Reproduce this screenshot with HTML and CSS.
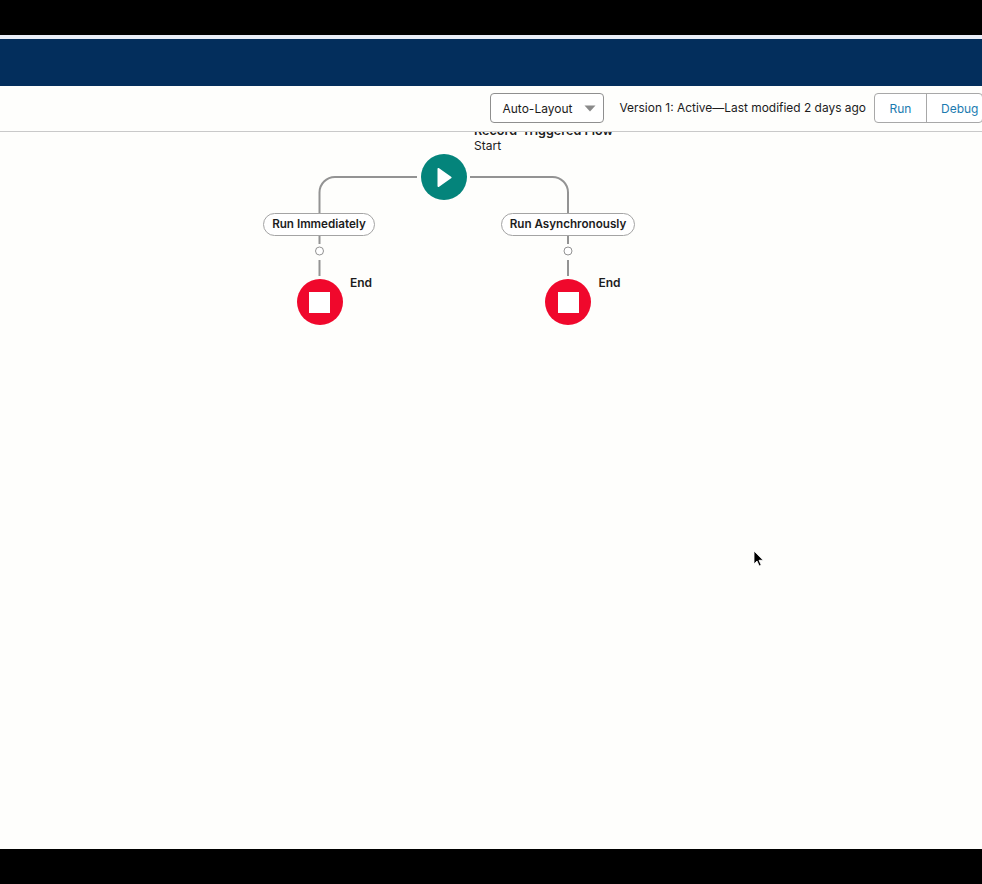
FILE: index.html
```html
<!DOCTYPE html>
<html lang="en">
<head>
<meta charset="utf-8">
<title>Flow Builder</title>
<link rel="stylesheet" href="styles.css">
</head>
<body>
<div class="page">
  <div class="letterbox-top"></div>
  <div class="strip"></div>
  <header class="brand"></header>
  <div class="toolbar">
    <div class="select"><span>Auto-Layout</span><svg class="caret" width="12" height="7" viewBox="0 0 12 7"><path d="M0.5 0.5h11L6 6.500z" fill="#8a8a8a"/></svg></div>
    <span class="version">Version 1: Active—Last modified 2 days ago</span>
    <div class="btn-group"><span class="btn">Run</span><span class="btn">Debug</span></div>
  </div>
  <main class="canvas">
    <svg class="wires" width="982" height="717" viewBox="0 0 982 717" fill="none">
      <g stroke="#939393" stroke-width="2">
        <path d="M417 45H335a15.500 15.500 0 0 0-15.500 15.500V82"/>
        <path d="M470 45H552.500a15.500 15.500 0 0 1 15.500 15.500V82"/>
        <path d="M319.500 104V112M319.500 128V144"/>
        <path d="M568 104V112M568 128V144"/>
      </g>
      <g stroke="#939393" fill="#fff" stroke-width="1">
        <circle cx="319.500" cy="119" r="4"/>
        <circle cx="568" cy="119" r="4"/>
      </g>
    </svg>
    <div class="start-label"><b>Record-Triggered Flow</b><span>Start</span></div>
    <div class="node start"><svg width="15" height="21" viewBox="0 0 15 21"><path d="M0.500 2a1 1 0 0 1 1.600-.8l12 8.500a1 1 0 0 1 0 1.600l-12 8.500a1 1 0 0 1-1.600-.8z" fill="#fff"/></svg></div>
    <div class="pill pill-left">Run Immediately</div>
    <div class="pill pill-right">Run Asynchronously</div>
    <div class="node end end-left"><i></i></div>
    <div class="node end end-right"><i></i></div>
    <b class="end-text end-text-left">End</b>
    <b class="end-text end-text-right">End</b>
    <svg class="cursor" width="12" height="18" viewBox="0 0 12 18"><path d="M1 1v13l3-3 2.200 5 2-.9L6 10.300h4.200z" fill="#000" stroke="#fff" stroke-width=".8"/></svg>
  </main>
  <div class="letterbox-bottom"></div>
</div>
</body>
</html>
```

FILE: styles.css
```css
* { box-sizing: border-box; }
html, body { margin: 0; padding: 0; }
body { background: #000; font-family: Inter, "Liberation Sans", sans-serif; color: #1c1c1c; }
.page { width: 982px; height: 884px; display: flex; flex-direction: column; overflow: hidden; }
.letterbox-top { height: 35px; background: #000; flex: none; }
.strip { height: 4px; background: #e9eef9; flex: none; }
.brand { height: 47px; background: #032e5c; flex: none; }
.toolbar {
  height: 46px; flex: none; position: relative; z-index: 2;
  background: #fefefc; border-bottom: 1px solid #c9c9c9;
  display: flex; align-items: center; justify-content: flex-end;
  padding: 0 0 1px 0; font-size: 12px;
  overflow: hidden;
}
.select {
  width: 114px; height: 30px; border: 1px solid #8f8f8f; border-radius: 4px; background: #fff;
  display: flex; align-items: center; justify-content: space-between; padding: 0 7px 0 11px;
  margin-right: 15px; flex: none;
}
.version { margin-right: 8px; padding-bottom: 2px; font-size: 11.950px; white-space: nowrap; flex: none; }
.btn-group { display: flex; width: 109px; margin-right: -1px; flex: none; height: 30px; border: 1px solid #a8a8a8; border-radius: 4px; background: #fff; }
.btn { color: #1b7bb0; display: flex; align-items: center; justify-content: center; white-space: nowrap; }
.btn:first-child { width: 52px; border-right: 1px solid #a8a8a8; }
.btn:last-child { padding-left: 14px; justify-content: flex-start; }
.canvas { flex: 1; position: relative; background: #fefefc; }
.wires { position: absolute; left: 0; top: 0; }
.start-label { position: absolute; left: 474px; top: -9px; font-size: 12px; line-height: 15px; display: flex; flex-direction: column; white-space: nowrap; }
.start-label b { font-weight: 600; font-size: 12.600px; }
.node { position: absolute; width: 46px; height: 46px; border-radius: 50%; display: flex; align-items: center; justify-content: center; }
.start { left: 421px; top: 22px; background: #04847b; }
.end { background: #f0082c; top: 147px; }
.end i { width: 21px; height: 21px; background: #fff; display: block; }
.end-left { left: 296.500px; }
.end-right { left: 545px; }
.pill {
  position: absolute; top: 81px; height: 23px; background: #fff; border: 1px solid #a4a4a4; border-radius: 12px;
  font-size: 11.650px; font-weight: 600; padding-bottom: 1px; display: flex; align-items: center; justify-content: center; white-space: nowrap;
}
.pill-left { left: 263px; width: 112px; }
.pill-right { left: 501px; width: 134px; }
.end-text { position: absolute; top: 143px; font-size: 12px; line-height: 15px; font-weight: 600; }
.end-text-left { left: 350px; }
.end-text-right { left: 598.500px; }
.cursor { position: absolute; left: 753px; top: 418px; }
.letterbox-bottom { height: 35px; background: #000; flex: none; }
```
